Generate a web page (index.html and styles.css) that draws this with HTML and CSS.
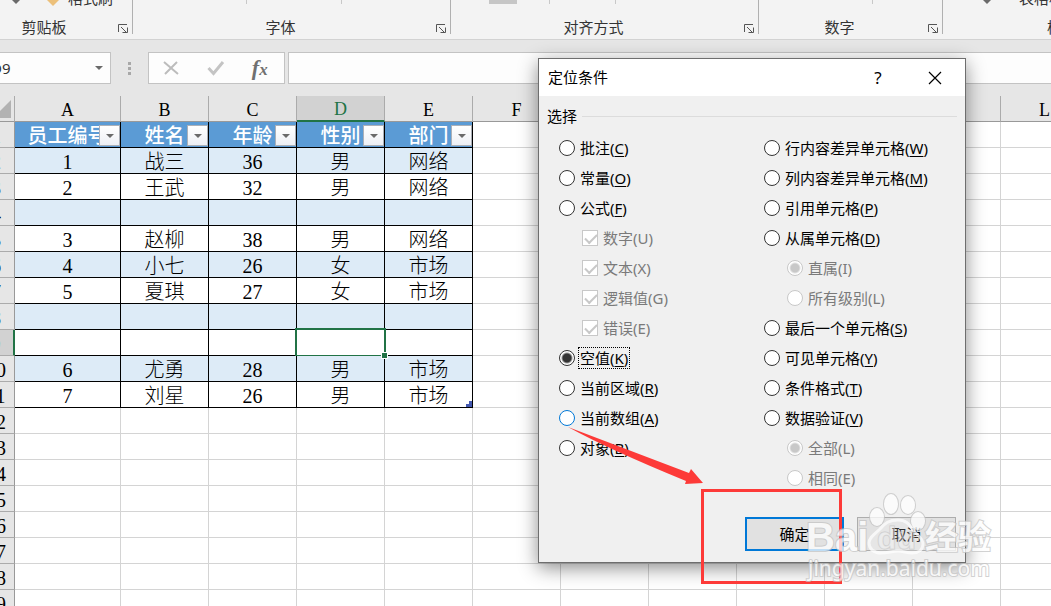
FILE: index.html
```html
<!DOCTYPE html>
<html lang="zh-CN">
<head>
<meta charset="utf-8">
<title>定位条件</title>
<link rel="stylesheet" href="styles.css">
</head>
<body>
<svg class="defs" aria-hidden="true">
  <symbol id="launcher" viewBox="0 0 10 9"><path d="M.5 8V.5H9M3 3l5 5M4.500 8.500h5V3.500" fill="none" stroke="#555"/></symbol>
  <symbol id="caret" viewBox="0 0 8 4"><path d="M0 0h8L4 4z" fill="#6a6a6a"/></symbol>
</svg>

<header class="ribbon">
  <section class="group clipboard">
    <div class="tools"><svg class="tip" viewBox="0 0 8 4"><use href="#caret"/></svg><svg class="brush" viewBox="0 0 12 6"><path d="M0 0h12L6 6z" fill="#ecc07a"/></svg><span class="cut">格式刷</span></div>
    <h2>剪贴板</h2>
    <button class="launch" aria-label="剪贴板选项"><svg viewBox="0 0 10 9"><use href="#launcher"/></svg></button>
  </section>
  <section class="group font">
    <div class="tools ticks"><i></i><i></i></div>
    <h2>字体</h2>
    <button class="launch" aria-label="字体选项"><svg viewBox="0 0 10 9"><use href="#launcher"/></svg></button>
  </section>
  <section class="group align">
    <div class="tools ticks"><b></b><i></i><i></i></div>
    <h2>对齐方式</h2>
    <button class="launch" aria-label="对齐选项"><svg viewBox="0 0 10 9"><use href="#launcher"/></svg></button>
  </section>
  <section class="group number">
    <div class="tools ticks"><i></i></div>
    <h2>数字</h2>
    <button class="launch" aria-label="数字选项"><svg viewBox="0 0 10 9"><use href="#launcher"/></svg></button>
  </section>
  <section class="group style">
    <div class="tools"><svg class="tip" viewBox="0 0 8 4"><use href="#caret"/></svg><span class="cut">表格格式</span></div>
    <h2>样式</h2>
  </section>
</header>

<div class="formula-bar">
  <div class="name-box"><input type="text" value="D9" aria-label="名称框"><svg viewBox="0 0 8 4"><use href="#caret"/></svg></div>
  <div class="dots"><i></i><i></i><i></i></div>
  <div class="fx">
    <button aria-label="取消输入"><svg viewBox="0 0 18 16"><path d="M2 2l14 12M15 2L3 14" stroke="#bcbcbc" stroke-width="2" fill="none"/></svg></button>
    <button aria-label="输入"><svg viewBox="0 0 18 16"><path d="M1.500 8l5 5.500L16 2" stroke="#c4c4c4" stroke-width="3" fill="none"/></svg></button>
    <button class="fn" aria-label="插入函数">f<sub>x</sub></button>
  </div>
  <input class="formula" type="text" aria-label="编辑栏">
</div>

<main class="sheet">
<table class="grid">
  <colgroup><col class="c-row"><col class="c-a"><col span="11"></colgroup>
  <thead>
    <tr><th class="corner"><svg viewBox="0 0 18 18"><path d="M18 0v18H0z" fill="#b2b2b2"/></svg><th>A<th>B<th>C<th class="on">D<th>E<th>F<th>G<th>H<th>I<th>J<th>K<th>L</tr>
  </thead>
  <tbody>
    <tr class="t head"><th>1<td>员工编号<button aria-label="筛选"><svg viewBox="0 0 8 4"><use href="#caret"/></svg></button><td>姓名<button aria-label="筛选"><svg viewBox="0 0 8 4"><use href="#caret"/></svg></button><td>年龄<button aria-label="筛选"><svg viewBox="0 0 8 4"><use href="#caret"/></svg></button><td>性别<button aria-label="筛选"><svg viewBox="0 0 8 4"><use href="#caret"/></svg></button><td>部门<button aria-label="筛选"><svg viewBox="0 0 8 4"><use href="#caret"/></svg></button><td><td><td><td><td><td><td></tr>
    <tr class="t band"><th>2<td>1<td>战三<td>36<td>男<td>网络<td><td><td><td><td><td><td></tr>
    <tr class="t"><th>3<td>2<td>王武<td>32<td>男<td>网络<td><td><td><td><td><td><td></tr>
    <tr class="t band"><th>4<td><td><td><td><td><td><td><td><td><td><td><td></tr>
    <tr class="t"><th>5<td>3<td>赵柳<td>38<td>男<td>网络<td><td><td><td><td><td><td></tr>
    <tr class="t band"><th>6<td>4<td>小七<td>26<td>女<td>市场<td><td><td><td><td><td><td></tr>
    <tr class="t"><th>7<td>5<td>夏琪<td>27<td>女<td>市场<td><td><td><td><td><td><td></tr>
    <tr class="t band"><th>8<td><td><td><td><td><td><td><td><td><td><td><td></tr>
    <tr class="t"><th class="on">9<td><td><td><td class="active"><span class="handle"></span><td><td><td><td><td><td><td><td></tr>
    <tr class="t band"><th>10<td>6<td>尤勇<td>28<td>男<td>市场<td><td><td><td><td><td><td></tr>
    <tr class="t"><th>11<td>7<td>刘星<td>26<td>男<td class="end">市场<svg viewBox="0 0 6 6"><path d="M3 0h3v6H0V3h3z" fill="#4459b0"/></svg><td><td><td><td><td><td><td></tr>
    <tr><th>12<td><td><td><td><td><td><td><td><td><td><td><td></tr>
    <tr><th>13<td><td><td><td><td><td><td><td><td><td><td><td></tr>
    <tr><th>14<td><td><td><td><td><td><td><td><td><td><td><td></tr>
    <tr><th>15<td><td><td><td><td><td><td><td><td><td><td><td></tr>
    <tr><th>16<td><td><td><td><td><td><td><td><td><td><td><td></tr>
    <tr><th>17<td><td><td><td><td><td><td><td><td><td><td><td></tr>
    <tr><th>18<td><td><td><td><td><td><td><td><td><td><td><td></tr>
    <tr><th>19<td><td><td><td><td><td><td><td><td><td><td><td></tr>
  </tbody>
</table>
</main>

<form class="dialog" role="dialog" aria-labelledby="dlg-title">
  <div class="title-bar">
    <h1 id="dlg-title">定位条件</h1>
    <button type="button" class="help">?</button>
    <button type="button" class="close" aria-label="关闭"><svg viewBox="0 0 14 14"><path d="M1 1l12 12M13 1L1 13" stroke="#000" stroke-width="1.200" fill="none"/></svg></button>
  </div>
  <fieldset>
    <legend>选择</legend>
    <div class="options">
      <div class="col">
        <label><input type="radio" name="go"><span>批注(<u>C</u>)</span></label>
        <label><input type="radio" name="go"><span>常量(<u>O</u>)</span></label>
        <label><input type="radio" name="go"><span>公式(<u>F</u>)</span></label>
        <label class="sub"><input type="checkbox" checked disabled><span>数字(U)</span></label>
        <label class="sub"><input type="checkbox" checked disabled><span>文本(X)</span></label>
        <label class="sub"><input type="checkbox" checked disabled><span>逻辑值(G)</span></label>
        <label class="sub"><input type="checkbox" checked disabled><span>错误(E)</span></label>
        <label class="focus"><input type="radio" name="go" checked><span>空值(<u>K</u>)</span></label>
        <label><input type="radio" name="go"><span>当前区域(<u>R</u>)</span></label>
        <label class="hot"><input type="radio" name="go"><span>当前数组(<u>A</u>)</span></label>
        <label><input type="radio" name="go"><span>对象(<u>B</u>)</span></label>
      </div>
      <div class="col">
        <label><input type="radio" name="go"><span>行内容差异单元格(<u>W</u>)</span></label>
        <label><input type="radio" name="go"><span>列内容差异单元格(<u>M</u>)</span></label>
        <label><input type="radio" name="go"><span>引用单元格(<u>P</u>)</span></label>
        <label><input type="radio" name="go"><span>从属单元格(<u>D</u>)</span></label>
        <label class="sub"><input type="radio" name="dep" checked disabled><span>直属(I)</span></label>
        <label class="sub"><input type="radio" name="dep" disabled><span>所有级别(L)</span></label>
        <label><input type="radio" name="go"><span>最后一个单元格(<u>S</u>)</span></label>
        <label><input type="radio" name="go"><span>可见单元格(<u>Y</u>)</span></label>
        <label><input type="radio" name="go"><span>条件格式(<u>T</u>)</span></label>
        <label><input type="radio" name="go"><span>数据验证(<u>V</u>)</span></label>
        <label class="sub"><input type="radio" name="val" checked disabled><span>全部(L)</span></label>
        <label class="sub"><input type="radio" name="val" disabled><span>相同(E)</span></label>
      </div>
    </div>
  </fieldset>
  <div class="actions">
    <button type="button" class="ok">确定</button>
    <button type="button">取消</button>
  </div>
</form>

<svg class="arrow" viewBox="0 0 136 58" aria-hidden="true"><path d="M0 0L121 46l2-4 12 14-18 1 1-3Q40 22 0 0z" fill="#fd3a38"/></svg>
<div class="mark-box"></div>
<svg class="watermark" viewBox="0 0 200 96" aria-hidden="true">
  <g class="paw">
    <ellipse cx="76" cy="28" rx="7" ry="9"/>
    <ellipse cx="90" cy="15" rx="7" ry="10"/>
    <ellipse cx="107" cy="16" rx="7" ry="9"/>
    <ellipse cx="117" cy="32" rx="7" ry="9"/>
    <path class="pad" d="M97 31c8 0 11 4 15 10 4 5 10 8 10 14 0 6-5 9-11 9-5 0-9-2-14-2s-11 2-17 2c-7 0-12-4-12-10 0-6 6-9 11-14 5-6 9-9 18-9z"/>
  </g>
  <text class="big" x="5" y="62">Bai</text>
  <text class="du" x="76" y="60">du</text>
  <text class="cn" x="124" y="60">经验</text>
  <text class="url" x="7" y="87">jingyan.baidu.com</text>
</svg>
</body>
</html>
```

FILE: styles.css
```css
* { box-sizing: border-box; }

body {
  margin: 0;
  height: 100vh;
  overflow: hidden;
  position: relative;
  display: flex;
  flex-direction: column;
  background: #e6e6e6;
  color: #000;
  font: 15px/20px "Noto Sans", "Noto Sans CJK SC", sans-serif;
}

button { padding: 0; border: 0; background: none; font: inherit; color: inherit; }
h1, h2 { margin: 0; font-size: 15px; font-weight: 400; }
svg { display: block; }
.defs { display: none; }

/* Ribbon */
.ribbon {
  flex: none;
  display: flex;
  height: 40px;
  background: #f3f3f3;
  border-bottom: 1px solid #d2d2d2;
  color: #333;
}
.group {
  flex: none;
  display: grid;
  grid-template-columns: 1fr 18px;
  grid-template-rows: 17px 20px;
  height: 34px;
  border-right: 1px solid #b0b0b0;
}
.group h2 { text-align: center; }
.tools { grid-column: 1 / 3; display: flex; align-items: flex-start; min-width: 0; }
.clipboard { width: 133px; }
.clipboard h2 { padding-right: 26px; }
.font { width: 318px; }
.align { width: 308px; }
.align h2, .number h2, .font h2 { padding-right: 4px; }
.number { width: 184px; }
.style { flex: 1; border: 0; }
.style h2 { grid-column: 1 / 3; text-align: left; padding-left: 104px; white-space: nowrap; }
.launch { align-self: center; padding-top: 2px; }
.launch svg { width: 10px; height: 9px; margin-left: 4px; }
.tip { flex: none; width: 8px; height: 4px; margin-left: 12px; }
.brush { flex: none; width: 12px; height: 6px; margin-left: 27px; }
.cut { white-space: nowrap; margin: -12px 0 0 9px; }
.style .tip { margin-left: 40px; }
.style .cut { margin-left: 28px; }
.ticks { padding-left: 113px; gap: 94px; }
.align .ticks { padding-left: 38px; gap: 32px; }
.align .ticks i + i { margin-left: 33px; }
.ticks i { width: 1px; height: 4px; background: #c8c8c8; }
.ticks b { width: 28px; height: 4px; background: #c6c6c6; }

/* Formula bar */
.formula-bar {
  flex: none;
  display: flex;
  height: 32px;
  margin: 12px 0;
}
.name-box, .fx, .formula { background: #fdfdfd; border: 1px solid #c3c3c3; }
.name-box { width: 121px; margin-left: -10px; display: flex; align-items: center; padding-right: 7px; }
.name-box input { flex: 1; min-width: 0; padding: 0; border: 0; background: none; font: inherit; color: #333; }
.name-box svg { width: 8px; height: 4px; }
.dots { width: 37px; display: flex; flex-direction: column; align-items: center; justify-content: center; gap: 2px; }
.dots i { width: 3px; height: 3px; background: #a8a8a8; }
.fx { width: 137px; display: flex; align-items: center; justify-content: space-around; padding-right: 3px; }
.fx svg { width: 18px; height: 16px; }
.fn { font: italic bold 22px/24px "Liberation Serif", serif; color: #707070; }
.fn sub { font-size: 17px; line-height: 0; vertical-align: 0; }
.formula { flex: 1; min-width: 0; margin-left: 3px; border-right: 0; }

/* Worksheet */
.sheet { flex: 1; min-height: 0; overflow: hidden; }
.grid {
  width: 1111px;
  margin-left: -22px;
  table-layout: fixed;
  border-collapse: separate;
  border-spacing: 0;
  background: #fff;
  font: 20px/22px "Liberation Serif", "Noto Sans CJK SC", serif;
  font-weight: 300;
}
.grid col { width: 88px; }
.grid .c-row { width: 37px; }
.grid .c-a { width: 106px; }
.grid th, .grid td {
  height: 26px;
  padding: 3px 0 0;
  text-align: center;
  line-height: 22px;
  white-space: nowrap;
  border-right: 1px solid #d4d4d4;
  border-bottom: 1px solid #d4d4d4;
  position: relative;
}
.grid th { font-weight: 400; background: #e6e6e6; border-color: #ababab; }
.grid thead th { font-size: 18px; border-bottom-color: #999; }
.grid tbody th { border-right-color: #999; }
.grid .corner { padding: 0 3px 0 0; }
.corner svg { width: 18px; height: 18px; margin-left: auto; }
.grid th.on { background: #d2d2d2; }
.grid thead th.on { color: #217346; border-bottom: 2px solid #217346; line-height: 21px; }
.grid tbody th.on { border-right: 2px solid #217346; }
.t td:nth-child(-n+6) { border-color: #000; }
.band td:nth-child(-n+6) { background: #ddebf7; }
.head td:nth-child(-n+6) { background: #5b9bd5; color: #fff; font-weight: 500; }
.head button {
  position: absolute;
  right: 0;
  top: 3px;
  width: 21px;
  height: 21px;
  display: grid;
  place-items: center;
  background: linear-gradient(#fff, #eef0f5);
  border: 1px solid #abb0b8;
}
.head button svg { width: 8px; height: 4px; }
.active::after {
  content: "";
  position: absolute;
  inset: -2px;
  border: 2px solid #217346;
}
.handle {
  position: absolute;
  z-index: 1;
  right: -4px;
  bottom: -4px;
  width: 7px;
  height: 7px;
  background: #217346;
  border: 1px solid #fff;
}
.end svg { position: absolute; right: 0; bottom: 0; width: 6px; height: 6px; }

/* Dialog */
.dialog {
  position: absolute;
  left: 538px;
  top: 58px;
  width: 428px;
  background: #f0f0f0;
  border: 1px solid #6e6e6e;
  box-shadow: 0 5px 18px rgba(0, 0, 0, .45);
}
.title-bar { display: flex; align-items: center; height: 37px; padding: 0 23px 0 9px; background: #fff; }
.title-bar h1 { flex: 1; padding-bottom: 2px; }
.help { width: 14px; margin-right: 43px; font-size: 17px; }
.close svg { width: 14px; height: 14px; }
fieldset { margin: 0; padding: 0 8px; border: 0; }
legend { display: flex; align-items: center; width: 100%; padding: 0; height: 40px; gap: 5px; }
legend::after { content: ""; flex: 1; height: 1px; background: #dcdcdc; }
.options { display: grid; grid-template-columns: 205px 1fr; padding-left: 12px; margin-top: -3px; }
.col label { display: flex; align-items: center; gap: 3px; height: 30px; white-space: nowrap; }
.col span { padding: 0 1px; border: 1px solid transparent; line-height: 20px; }
.col u { text-underline-offset: 2px; }
.col .sub { padding-left: 23px; color: #7a7a7a; }
.col .focus span { border: 1px dotted #000; }
.col input {
  appearance: none;
  flex: none;
  width: 16px;
  height: 16px;
  margin: 0;
  border: 1px solid #333;
  background: #fff;
}
.col input[type="radio"] { border-radius: 50%; }
.col input[type="radio"]:checked { background: radial-gradient(circle, #333 4px, #fff 6px); }
.col input:disabled { border-color: #c8c8c8; }
.col input[type="radio"]:checked:disabled { background: radial-gradient(circle, #c8c8c8 4px, #fff 6px); }
.col input[type="checkbox"]::after {
  content: "";
  display: block;
  width: 10px;
  height: 5px;
  margin: 3px 2px;
  border: solid #c8c8c8;
  border-width: 0 0 2px 2px;
  rotate: -45deg;
}
.col .hot input { border-color: #0078d7; }
.actions { display: flex; justify-content: flex-end; gap: 13px; padding: 24px 9px 11px; }
.actions button { width: 99px; height: 34px; background: #e1e1e1; border: 1px solid #adadad; }
.actions .ok { border: 2px solid #0078d7; }

/* Overlays */
.arrow { position: absolute; left: 568px; top: 427px; width: 136px; height: 58px; }
.mark-box { position: absolute; left: 701px; top: 489px; width: 141px; height: 95px; border: 3px solid #fd3a38; }
.watermark { position: absolute; left: 801px; top: 489px; width: 200px; height: 96px; opacity: .75; }
.watermark text, .paw { fill: #fff; stroke: #c4c4c4; stroke-width: 2px; paint-order: stroke; }
.paw .pad { fill-opacity: .25; stroke: #fff; stroke-width: 3px; }
.watermark text { font-family: "Liberation Sans", "Noto Sans CJK SC", sans-serif; }
.watermark .big { font-size: 40px; font-weight: 700; }
.watermark .du { font-size: 32px; font-weight: 700; fill-opacity: .4; stroke-width: 1px; }
.watermark .cn { font-size: 33px; font-weight: 700; }
.watermark .url { font-family: "Noto Sans", sans-serif; font-size: 21px; }
```
